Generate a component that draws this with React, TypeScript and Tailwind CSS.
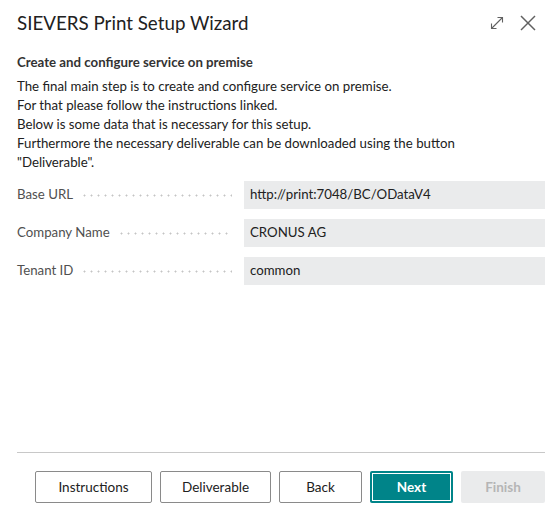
import React from 'react';

const fields = [
  { label: 'Base URL', value: 'http://print:7048/BC/ODataV4' },
  { label: 'Company Name', value: 'CRONUS AG' },
  { label: 'Tenant ID', value: 'common' },
];

const intro = [
  'The final main step is to create and configure service on premise.',
  'For that please follow the instructions linked.',
  'Below is some data that is necessary for this setup.',
  'Furthermore the necessary deliverable can be downloaded using the button',
  '"Deliverable".',
];

function ExpandIcon() {
  return (
    <svg width="16" height="16" viewBox="0 0 16 16" fill="none" stroke="#616161" strokeWidth="1.1">
      <path d="M2.5 13.5 L13.5 2.5" />
      <path d="M8.5 2.5 H13.5 V7.5" />
      <path d="M2.5 8.5 V13.5 H7.5" />
    </svg>
  );
}

function CloseIcon() {
  return (
    <svg width="18" height="18" viewBox="0 0 18 18" fill="none" stroke="#616161" strokeWidth="1.5">
      <path d="M2 2 L16 16" />
      <path d="M16 2 L2 16" />
    </svg>
  );
}

export default function App() {
  return (
    <div
      className="h-[521px] w-[558px] bg-white flex flex-col text-[#212121]"
      style={{ fontFamily: 'Lato, "Noto Sans", sans-serif' }}
    >
      {/* Header */}
      <div className="flex items-center justify-between pl-[17px] pr-[21px] pt-[8px] h-[38px]">
        <h1 className="text-[18.75px] leading-[26px] text-[#212121]">SIEVERS Print Setup Wizard</h1>
        <div className="flex items-center gap-[14px]">
          <ExpandIcon />
          <CloseIcon />
        </div>
      </div>

      {/* Content */}
      <div className="flex-1 pl-[17px] pr-[13px] pt-[15px]">
        <div className="text-[13.25px] font-bold leading-[18px] text-[#333]">
          Create and configure service on premise
        </div>
        <div className="mt-[6px] text-[13.25px] leading-[19px] text-[#212121]">
          {intro.map((line) => (
            <div key={line}>{line}</div>
          ))}
        </div>

        <div className="mt-[9px] flex flex-col gap-[10px]">
          {fields.map((f) => (
            <div key={f.label} className="flex items-center h-[28px]">
              <div className="w-[227px] flex items-center pr-[12px]">
                <span className="text-[13.25px] text-[#505050] pr-[8px] whitespace-nowrap">{f.label}</span>
                <span className="flex-1 h-[3px] bg-[radial-gradient(circle,#c4c4c4_0.9px,transparent_1.1px)] bg-[length:7px_3px] bg-repeat-x" />
              </div>
              <div className="flex-1 h-[28px] bg-[#eaebec] flex items-center px-[6px] text-[13.25px] text-[#212121]">
                {f.value}
              </div>
            </div>
          ))}
        </div>
      </div>

      {/* Footer */}
      <div className="pl-[17px] pr-[13px]">
        <div className="border-t border-[#c8c8c8]" />
        <div className="flex justify-end gap-[8px] pt-[18px] pb-[18px]">
          <button className="h-[32px] w-[117px] border border-[#8a8a8a] rounded-[2px] text-[13.5px] text-[#212121]">
            Instructions
          </button>
          <button className="h-[32px] w-[111px] border border-[#8a8a8a] rounded-[2px] text-[13.5px] text-[#212121]">
            Deliverable
          </button>
          <button className="h-[32px] w-[83px] border border-[#8a8a8a] rounded-[2px] text-[13.5px] text-[#212121]">
            Back
          </button>
          <button className="h-[32px] w-[83px] rounded-[2px] bg-[#008489] p-[2px]">
            <span className="flex h-full w-full items-center justify-center border border-white text-[13.5px] font-bold text-white">
              Next
            </span>
          </button>
          <button className="h-[32px] w-[84px] rounded-[2px] bg-[#eaebec] text-[13.5px] font-bold text-[#b5b5b5]">
            Finish
          </button>
        </div>
      </div>
    </div>
  );
}
